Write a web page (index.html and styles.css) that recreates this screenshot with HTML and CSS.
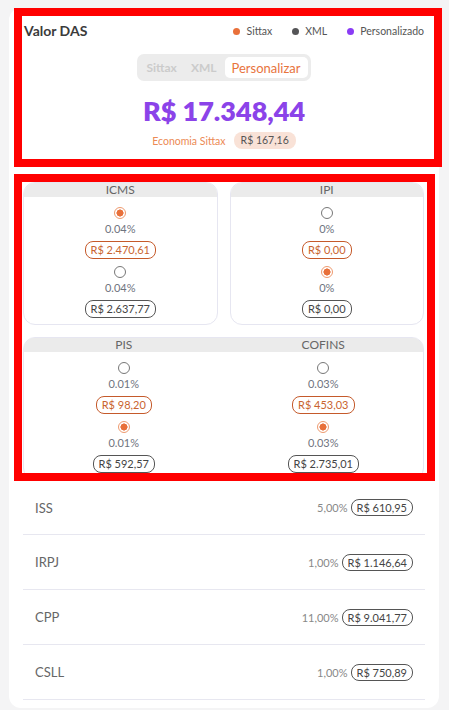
FILE: index.html
```html
<!DOCTYPE html>
<html lang="pt-BR">
<head>
<meta charset="utf-8">
<title>Valor DAS</title>
<link rel="stylesheet" href="styles.css">
</head>
<body>
<div class="card">
  <section class="das">
    <div class="das-head">
      <h2 class="das-title">Valor DAS</h2>
      <ul class="legend">
        <li><span class="dot dot-orange"></span>Sittax</li>
        <li><span class="dot dot-gray"></span>XML</li>
        <li><span class="dot dot-purple"></span>Personalizado</li>
      </ul>
    </div>
    <div class="toggle-wrap">
      <div class="toggle">
        <span class="toggle-item">Sittax</span>
        <span class="toggle-item">XML</span>
        <span class="toggle-item active">Personalizar</span>
      </div>
    </div>
    <div class="amount">R$ 17.348,44</div>
    <div class="economy">
      <span class="economy-label">Economia Sittax</span>
      <span class="economy-pill">R$ 167,16</span>
    </div>
  </section>

  <section class="taxes">
    <div class="tax-row">
      <div class="tax-card">
        <div class="tax-head">ICMS</div>
        <div class="tax-col">
          <span class="radio checked"></span>
          <span class="pct">0.04%</span>
          <span class="pill pill-orange">R$ 2.470,61</span>
          <span class="radio second"></span>
          <span class="pct">0.04%</span>
          <span class="pill">R$ 2.637,77</span>
        </div>
      </div>
      <div class="tax-card">
        <div class="tax-head">IPI</div>
        <div class="tax-col">
          <span class="radio"></span>
          <span class="pct">0%</span>
          <span class="pill pill-orange">R$ 0,00</span>
          <span class="radio checked second"></span>
          <span class="pct">0%</span>
          <span class="pill">R$ 0,00</span>
        </div>
      </div>
    </div>
    <div class="tax-card wide">
      <div class="tax-heads">
        <div class="tax-head">PIS</div>
        <div class="tax-head">COFINS</div>
      </div>
      <div class="tax-cols">
        <div class="tax-col">
          <span class="radio"></span>
          <span class="pct">0.01%</span>
          <span class="pill pill-orange">R$ 98,20</span>
          <span class="radio checked second"></span>
          <span class="pct">0.01%</span>
          <span class="pill">R$ 592,57</span>
        </div>
        <div class="tax-col">
          <span class="radio"></span>
          <span class="pct">0.03%</span>
          <span class="pill pill-orange">R$ 453,03</span>
          <span class="radio checked second"></span>
          <span class="pct">0.03%</span>
          <span class="pill">R$ 2.735,01</span>
        </div>
      </div>
    </div>
  </section>

  <ul class="list">
    <li class="list-row"><span class="list-name">ISS</span><span class="list-right"><span class="list-pct">5,00%</span><span class="pill">R$ 610,95</span></span></li>
    <li class="list-row"><span class="list-name">IRPJ</span><span class="list-right"><span class="list-pct">1,00%</span><span class="pill">R$ 1.146,64</span></span></li>
    <li class="list-row"><span class="list-name">CPP</span><span class="list-right"><span class="list-pct">11,00%</span><span class="pill">R$ 9.041,77</span></span></li>
    <li class="list-row"><span class="list-name">CSLL</span><span class="list-right"><span class="list-pct">1,00%</span><span class="pill">R$ 750,89</span></span></li>
  </ul>
</div>
</body>
</html>
```

FILE: styles.css
```css
* { box-sizing: border-box; }

html, body {
  margin: 0;
  padding: 0;
  background: #f4f4f5;
  font-family: Lato, "Open Sans", sans-serif;
  color: #555;
}

.card {
  margin: 8px 10px 0 9px;
  background: #fff;
  border-radius: 12px;
  padding: 0 0 8px 5px;
}

/* ---------- Valor DAS ---------- */
.das {
  border: 8px solid #ff0000;
  margin-right: -3px;
  height: 159px;
  padding: 0 10px 0 2px;
}

.das-head {
  display: flex;
  justify-content: space-between;
  align-items: center;
  padding-top: 6px;
  height: 24px;
}

.das-title {
  margin: 0;
  font-size: 14px;
  line-height: 18px;
  font-weight: 700;
  color: #3b3b3b;
}

.legend {
  display: flex;
  gap: 20px;
  list-style: none;
  margin: 0;
  padding: 0;
  font-size: 10.5px;
  line-height: 14px;
  color: #555;
}

.legend li {
  display: flex;
  align-items: center;
  gap: 6px;
}

.dot {
  width: 7px;
  height: 7px;
  border-radius: 50%;
}
.dot-orange { background: #e9703a; }
.dot-gray { background: #555557; }
.dot-purple { background: #8a3cf5; }

.toggle-wrap {
  display: flex;
  justify-content: center;
  margin-top: 14px;
}

.toggle {
  display: flex;
  gap: 2px;
  height: 27px;
  padding: 3px;
  background: #ececec;
  border-radius: 7px;
}

.toggle-item {
  display: flex;
  align-items: center;
  padding: 0 6px;
  font-size: 12px;
  font-weight: 700;
  color: #cbcbcb;
}

.toggle-item.active {
  padding: 0 7px;
  background: #fff;
  border-radius: 5px;
  font-size: 13px;
  font-weight: 400;
  color: #e8743d;
}

.amount {
  margin-top: 14px;
  text-align: center;
  font-size: 27px;
  line-height: 32px;
  font-weight: 800;
  color: #8b43e9;
}

.economy {
  display: flex;
  justify-content: center;
  align-items: center;
  gap: 8px;
  margin-top: 5px;
}

.economy-label {
  font-size: 10.5px;
  color: #ec8a55;
}

.economy-pill {
  background: #f9e2d7;
  border-radius: 8px;
  padding: 0 7px;
  height: 17px;
  line-height: 17px;
  font-size: 10.5px;
  color: #555;
}

/* ---------- Taxes ---------- */
.taxes {
  border: 8px solid #ff0000;
  margin: 7px 4px 0 0;
  height: 307px;
  padding: 0 3px 0 1px;
  overflow: hidden;
}

.tax-row {
  display: grid;
  grid-template-columns: 1fr 1fr;
  gap: 12px;
}

.tax-card {
  border: 1px solid #e6e6f1;
  border-radius: 12px;
  overflow: hidden;
}

.tax-card.wide {
  margin-top: 12px;
}

.tax-heads {
  display: grid;
  grid-template-columns: 1fr 1fr;
  background: #ebebeb;
}

.tax-head {
  background: #ebebeb;
  height: 14px;
  line-height: 14px;
  text-align: center;
  font-size: 12px;
  color: #666;
}

.tax-cols {
  display: grid;
  grid-template-columns: 1fr 1fr;
}

.tax-col {
  display: flex;
  flex-direction: column;
  align-items: center;
  padding: 10px 0 6px;
}

.radio {
  width: 12px;
  height: 12px;
  border-radius: 50%;
  border: 1px solid #777;
  background: #fff;
}

.radio.checked {
  border: 1.5px solid #ee9a6f;
  background: radial-gradient(circle, #e8703a 0 3.3px, #fff 3.8px);
}

.radio.second { margin-top: 7px; }

.pct {
  margin-top: 3px;
  font-size: 11px;
  line-height: 14px;
  color: #6f7480;
}

.pill {
  margin-top: 5px;
  height: 18px;
  line-height: 16px;
  padding: 0 5px;
  border: 1.5px solid #555;
  border-radius: 8px;
  font-size: 11px;
  color: #444;
  white-space: nowrap;
}

.pill-orange {
  border-color: #c55a2b;
  color: #c9642f;
}

/* ---------- List ---------- */
.list {
  list-style: none;
  margin: 0 14px 0 9px;
  padding: 0;
}

.list-row {
  display: flex;
  justify-content: space-between;
  align-items: center;
  height: 55px;
  padding: 0 12px;
  border-bottom: 1px solid #e7e7f0;
}

.list-row:first-child { height: 54px; }

.list-name {
  font-size: 13px;
  color: #666;
}

.list-right {
  display: flex;
  align-items: center;
  gap: 3px;
}

.list-pct {
  font-size: 11px;
  color: #888;
}

.list-right .pill { margin-top: 0; height: 17px; line-height: 15px; }
```
